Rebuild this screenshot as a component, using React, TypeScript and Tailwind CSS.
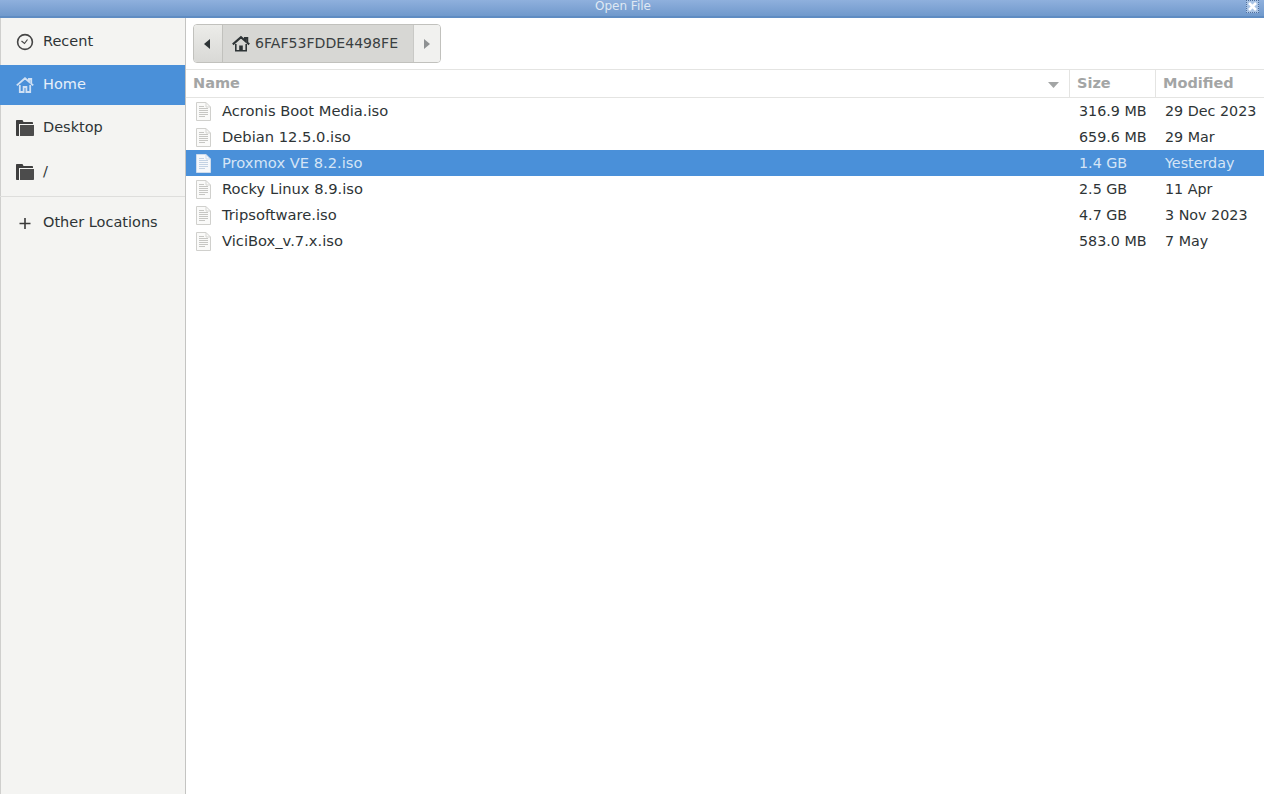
import React from "react";

const font = { fontFamily: '"DejaVu Sans", sans-serif' };

function FileIcon({ selected }: { selected?: boolean }) {
  const line = selected ? "#c3d2e4" : "#c6c6c3";
  return (
    <svg width="15" height="19" viewBox="0 0 15 19" className="shrink-0">
      <path d="M.5.5H10L14.5 5V18.5H.5Z" fill={selected ? "#f6f8fb" : "#fafaf9"} stroke={selected ? "#cfdcec" : "#d0d0cd"} />
      <path d="M10 .5V5H14.5" fill="none" stroke={selected ? "#cfdcec" : "#d6d6d3"} />
      <path d="M3 4.5H8M3 6.5H12M3 8.5H12M3 10.5H12M3 12.5H12M3 14.5H9" stroke={line} strokeWidth="1" />
    </svg>
  );
}

function HomeIcon({ color }: { color: string }) {
  return (
    <svg width="18" height="18" viewBox="0 0 18 18" className="shrink-0">
      <path d="M.8 9.4L9 2.2L13 5.7V3H15.2V7.6L17.2 9.4" fill="none" stroke={color} strokeWidth="2.1" />
      <path d="M3.8 9V15.7H14.2V9" fill="none" stroke={color} strokeWidth="1.6" />
      <path d="M7.2 10.5H10.8V15.7H7.2Z" fill={color} />
    </svg>
  );
}

function SideHomeIcon() {
  return (
    <svg width="18" height="18" viewBox="0 0 18 18" className="shrink-0">
      <path d="M.8 9.4L9 2.2L13 5.7V3H15.2V7.6L17.2 9.4" fill="none" stroke="#cfe0f4" strokeWidth="1.9" />
      <path d="M3.8 9V16H7.6V11H10.4V16H14.2V9" fill="none" stroke="#cfe0f4" strokeWidth="1.8" />
    </svg>
  );
}

function FolderIcon() {
  return (
    <svg width="18" height="16" viewBox="0 0 18 16" className="shrink-0">
      <path d="M0 1C0 .4.4 0 1 0H6.5L7.5 2H16C16.6 2 17 2.4 17 3V4H3V16H1C.4 16 0 15.6 0 15Z" fill="#3f3f3f" />
      <path d="M4 5H18V15C18 15.6 17.6 16 17 16H4Z" fill="#4c4c4c" />
    </svg>
  );
}

function ClockIcon() {
  return (
    <svg width="18" height="18" viewBox="0 0 18 18" className="shrink-0">
      <circle cx="9" cy="9" r="7.4" fill="none" stroke="#454545" strokeWidth="1.6" />
      <path d="M5.5 8L8.5 10.5L11.5 6.5" fill="none" stroke="#454545" strokeWidth="1.2" />
    </svg>
  );
}

function PlusIcon() {
  return (
    <svg width="18" height="18" viewBox="0 0 18 18" className="shrink-0">
      <path d="M9 4V15M3.5 9.5H14.5" stroke="#3a3a3a" strokeWidth="1.6" />
    </svg>
  );
}

const files = [
  { name: "Acronis Boot Media.iso", size: "316.9 MB", mod: "29 Dec 2023" },
  { name: "Debian 12.5.0.iso", size: "659.6 MB", mod: "29 Mar" },
  { name: "Proxmox VE 8.2.iso", size: "1.4 GB", mod: "Yesterday", selected: true },
  { name: "Rocky Linux 8.9.iso", size: "2.5 GB", mod: "11 Apr" },
  { name: "Tripsoftware.iso", size: "4.7 GB", mod: "3 Nov 2023" },
  { name: "ViciBox_v.7.x.iso", size: "583.0 MB", mod: "7 May" },
];

function SideRow({ icon, label, className }: { icon: React.ReactNode; label: string; className: string }) {
  return (
    <div className={`flex items-center ${className}`}>
      <span className="w-[27px] flex items-center">{icon}</span>
      <span>{label}</span>
    </div>
  );
}

export default function App() {
  return (
    <div className="w-[1264px] h-[794px] overflow-hidden bg-white flex flex-col text-[14.5px] text-[#2e3436]" style={font}>
      <div className="h-[18px] shrink-0 relative flex items-center bg-gradient-to-b from-[#8fb0dd] to-[#7099cc] border-b-2 border-[#5f8cc2]">
        <span className="ml-[595px] text-[12px] text-[#dfe8f3] -mt-[5px]">Open File</span>
        <div className="absolute right-[5px] top-0 w-[13px] h-[13px] bg-[#a9c3e4] border border-dotted border-[#4f6f9c] flex items-center justify-center">
          <svg width="11" height="11" viewBox="0 0 11 11">
            <path d="M2 2L9 9M9 2L2 9" stroke="#ffffff" strokeWidth="2.6" />
          </svg>
        </div>
      </div>
      <div className="flex-1 flex min-h-0">
        <aside className="w-[186px] shrink-0 bg-[#f4f4f2] border-l border-r border-l-[#cfcfcd] border-r-[#c4c4c2] flex flex-col text-[#2e3436]">
          <SideRow icon={<ClockIcon />} label="Recent" className="h-[47px] pl-[15px]" />
          <SideRow icon={<SideHomeIcon />} label="Home" className="h-[40px] bg-[#4a90d9] text-[#e6eff9] -ml-px pl-[16px]" />
          <SideRow icon={<FolderIcon />} label="Desktop" className="h-[45px] pl-[15px]" />
          <SideRow icon={<FolderIcon />} label="/" className="h-[43px] pl-[15px]" />
          <div className="h-px bg-[#dededc] mt-[3px] -ml-px" />
          <SideRow icon={<PlusIcon />} label="Other Locations" className="h-[51px] pt-px pl-[15px]" />
        </aside>
        <main className="flex-1 min-w-0 flex flex-col">
          <div className="h-[51px] shrink-0 flex items-start pl-[7px] pt-[6px]">
            <div className="flex h-[39px] w-[248px] rounded-[4px] border border-[#c1c1bd] overflow-hidden">
              <div className="w-[29px] flex items-center justify-center bg-gradient-to-b from-[#ecece9] to-[#d9d9d6] border-r border-[#c1c1bd]">
                <svg width="6" height="10" viewBox="0 0 6 10" className="-ml-[2px]"><path d="M6 0V10L0 5Z" fill="#2e3436" /></svg>
              </div>
              <div className="w-[190px] flex items-center gap-[5px] pl-[9px] bg-[#d7d7d4] text-[#3a3f41] text-[14.1px]">
                <HomeIcon color="#2e3436" />
                <span>6FAF53FDDE4498FE</span>
              </div>
              <div className="flex-1 flex items-center justify-center bg-[#f1f1ef] border-l border-[#c9c9c6]">
                <svg width="6" height="10" viewBox="0 0 6 10"><path d="M0 0V10L6 5Z" fill="#8e9192" /></svg>
              </div>
            </div>
          </div>
          <div className="h-[29px] shrink-0 flex border-t border-b border-[#e4e4e2] font-bold text-[#a3a5a5]">
            <div className="w-[884px] relative pl-[7px] flex items-center border-r border-[#e4e4e2]">
              Name
              <svg width="11" height="6" viewBox="0 0 11 6" className="absolute right-[10px] top-[12px]"><path d="M0 0H11L5.5 6Z" fill="#a3a5a5" /></svg>
            </div>
            <div className="w-[86px] pl-[7px] flex items-center border-r border-[#e4e4e2]">Size</div>
            <div className="flex-1 pl-[7px] flex items-center">Modified</div>
          </div>
          {files.map((f) => (
            <div key={f.name} className={`h-[26px] shrink-0 flex items-center pt-px ${f.selected ? "bg-[#4a90d9] text-[#d5e5f6]" : ""}`}>
              <div className="w-[884px] flex items-center pl-[10px] gap-[11px] text-[14.7px]">
                <FileIcon selected={f.selected} />
                <span>{f.name}</span>
              </div>
              <div className="w-[85px] pl-[9px] whitespace-nowrap text-[14.3px]">{f.size}</div>
              <div className="flex-1 pl-[10px] whitespace-nowrap text-[14.3px]">{f.mod}</div>
            </div>
          ))}
        </main>
      </div>
    </div>
  );
}
